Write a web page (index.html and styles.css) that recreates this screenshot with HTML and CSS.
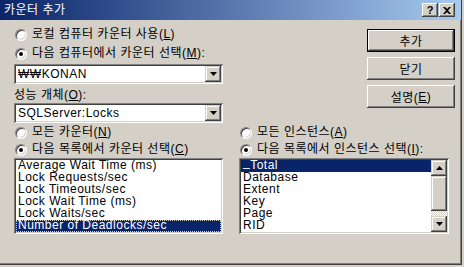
FILE: index.html
```html
<!DOCTYPE html>
<html lang="ko">
<head>
    <meta charset="UTF-8">
    <meta name="viewport" content="width=device-width, initial-scale=1.0">
    <title>카운터 추가</title>
    <link rel="stylesheet" href="styles.css">
</head>
<body>
    <div class="window">
        <div class="titlebar">
            <span class="title">카운터 추가</span>
            <span class="tb-btn help">?</span>
            <span class="tb-btn close">
                <svg width="8" height="7" viewBox="0 0 8 7"><path d="M0 0h2l2 2 2-2h2L5 3.5 8 7H6L4 5 2 7H0l3-3.5z" fill="#000"/></svg>
            </span>
        </div>

        <div class="body">
            <div class="top">
                <div class="col-left">
                    <div class="radio-row"><span class="radio"></span><span>로컬 컴퓨터 카운터 사용(<u>L</u>)</span></div>
                    <div class="radio-row spaced"><span class="radio on"></span><span>다음 컴퓨터에서 카운터 선택(<u>M</u>):</span></div>
                    <div class="combo">
                        <span class="combo-text">₩₩KONAN</span>
                        <span class="arrow-btn"><svg width="7" height="4" viewBox="0 0 7 4"><path d="M0 0h7L3.5 4z" fill="#000"/></svg></span>
                    </div>
                    <div class="label">성능 개체(<u>O</u>):</div>
                    <div class="combo tight">
                        <span class="combo-text">SQLServer:Locks</span>
                        <span class="arrow-btn"><svg width="7" height="4" viewBox="0 0 7 4"><path d="M0 0h7L3.5 4z" fill="#000"/></svg></span>
                    </div>
                </div>
                <div class="buttons">
                    <div class="btn default">추가</div>
                    <div class="btn">닫기</div>
                    <div class="btn">설명(<u>E</u>)</div>
                </div>
            </div>

            <div class="bottom">
                <div class="col-left">
                    <div class="radio-row"><span class="radio"></span><span>모든 카운터(<u>N</u>)</span></div>
                    <div class="radio-row"><span class="radio on"></span><span>다음 목록에서 카운터 선택(<u>C</u>)</span></div>
                    <div class="listbox">
                        <ul class="items">
                            <li>Average Wait Time (ms)</li>
                            <li>Lock Requests/sec</li>
                            <li>Lock Timeouts/sec</li>
                            <li>Lock Wait Time (ms)</li>
                            <li>Lock Waits/sec</li>
                            <li class="sel focus">Number of Deadlocks/sec</li>
                        </ul>
                    </div>
                </div>
                <div class="col-right">
                    <div class="radio-row"><span class="radio"></span><span>모든 인스턴스(<u>A</u>)</span></div>
                    <div class="radio-row"><span class="radio on"></span><span>다음 목록에서 인스턴스 선택(<u>I</u>):</span></div>
                    <div class="listbox">
                        <ul class="items">
                            <li class="sel"><span class="raise">_</span>Total</li>
                            <li>Database</li>
                            <li>Extent</li>
                            <li>Key</li>
                            <li>Page</li>
                            <li>RID</li>
                        </ul>
                        <div class="vscroll">
                            <span class="arrow-btn"><svg width="7" height="4" viewBox="0 0 7 4"><path d="M0 4h7L3.5 0z" fill="#000"/></svg></span>
                            <span class="thumb"></span>
                            <span class="track"></span>
                            <span class="arrow-btn"><svg width="7" height="4" viewBox="0 0 7 4"><path d="M0 0h7L3.5 4z" fill="#000"/></svg></span>
                        </div>
                    </div>
                </div>
            </div>
        </div>
    </div>
</body>
</html>
```

FILE: styles.css
```css
* {
    box-sizing: border-box;
}
html, body {
    margin: 0;
    padding: 0;
    background: #d4d0c8;
}
body {
    font-family: "Liberation Sans", "Noto Sans CJK KR", sans-serif;
    font-size: 12px;
    letter-spacing: 0.5px;
    color: #000;
}
u {
    text-decoration: underline;
    text-underline-offset: 1px;
}

.window {
    width: 462px;
    height: 265px;
    background: #d4d0c8;
    border-right: 1px solid #404040;
    border-bottom: 1px solid #404040;
    box-shadow: inset -1px -1px #808080;
}

/* title bar */
.titlebar {
    height: 20px;
    display: flex;
    align-items: center;
    padding: 0 6px 0 4px;
    background: linear-gradient(to right, #0a246a, #a6caf0);
}
.title {
    flex: 1;
    color: #fff;
    line-height: 20px;
}
.tb-btn {
    width: 16px;
    height: 14px;
    display: flex;
    align-items: center;
    justify-content: center;
    background: #d4d0c8;
    box-shadow: inset -1px -1px #404040, inset 1px 1px #fff, inset -2px -2px #808080;
    font-weight: bold;
    font-size: 11px;
    line-height: 14px;
    letter-spacing: 0;
}
.tb-btn.help {
    margin-right: 1px;
}

/* body */
.body {
    padding-left: 14px;
}
.top, .bottom {
    display: flex;
}
.col-left {
    width: 209px;
}
.top .col-left {
    padding-top: 6px;
}
.col-right {
    width: 210px;
    margin-left: 16px;
}
.bottom {
    margin-top: 1px;
}

.radio-row {
    height: 17px;
    line-height: 17px;
    display: flex;
    align-items: center;
    gap: 5px;
    padding-left: 1px;
    white-space: nowrap;
}
.radio-row.spaced {
    margin-top: 2px;
}
.radio {
    position: relative;
    width: 12px;
    height: 12px;
    flex: none;
    border-radius: 50%;
    background: #fff;
    border: 1px solid;
    border-color: #808080 #fff #fff #808080;
    box-shadow: inset 1px 1px #404040, inset -1px -1px #d4d0c8;
}
.radio.on::after {
    content: "";
    position: absolute;
    left: 3px;
    top: 3px;
    width: 4px;
    height: 4px;
    border-radius: 50%;
    background: #000;
}

.label {
    height: 14px;
    line-height: 14px;
    margin-top: 4px;
}

/* combo boxes */
.combo {
    height: 20px;
    margin-top: 2px;
    display: flex;
    align-items: center;
    padding: 2px;
    background: #fff;
    box-shadow: inset 1px 1px #808080, inset -1px -1px #fff, inset 2px 2px #404040, inset -2px -2px #d4d0c8;
}
.combo.tight {
    margin-top: 1px;
}
.combo-text {
    flex: 1;
    padding-left: 2px;
    line-height: 16px;
}
.arrow-btn {
    width: 16px;
    height: 16px;
    flex: none;
    display: flex;
    align-items: center;
    justify-content: center;
    background: #d4d0c8;
    box-shadow: inset -1px -1px #404040, inset 1px 1px #d4d0c8, inset -2px -2px #808080, inset 2px 2px #fff;
}

/* push buttons */
.buttons {
    width: 88px;
    margin-left: 144px;
    padding-top: 9px;
    display: flex;
    flex-direction: column;
    gap: 5px;
}
.btn {
    height: 23px;
    display: flex;
    align-items: center;
    justify-content: center;
    background: #d4d0c8;
    box-shadow: inset -1px -1px #404040, inset 1px 1px #fff, inset -2px -2px #808080;
}
.btn.default {
    box-shadow: inset 0 0 0 1px #000, inset -2px -2px #404040, inset 2px 2px #fff, inset -3px -3px #808080;
}

/* list boxes */
.listbox {
    height: 76px;
    display: flex;
    padding: 2px;
    background: #fff;
    box-shadow: inset 1px 1px #808080, inset -1px -1px #fff, inset 2px 2px #404040, inset -2px -2px #d4d0c8;
}
.items {
    flex: 1;
    margin: 0;
    padding: 0;
    list-style: none;
}
.items li {
    height: 12px;
    line-height: 11px;
    padding-left: 2px;
    white-space: nowrap;
}
.items li.sel {
    background: #0a246a;
    color: #fff;
}
.items li.focus {
    outline: 1px dotted #d4d0c8;
    outline-offset: -1px;
}
.raise {
    position: relative;
    top: -3px;
}

.vscroll {
    width: 16px;
    display: flex;
    flex-direction: column;
}
.thumb {
    height: 35px;
    background: #d4d0c8;
    box-shadow: inset -1px -1px #404040, inset 1px 1px #d4d0c8, inset -2px -2px #808080, inset 2px 2px #fff;
}
.track {
    flex: 1;
    background: repeating-conic-gradient(#fff 0 25%, #d4d0c8 0 50%) 0 0 / 2px 2px;
}
```
